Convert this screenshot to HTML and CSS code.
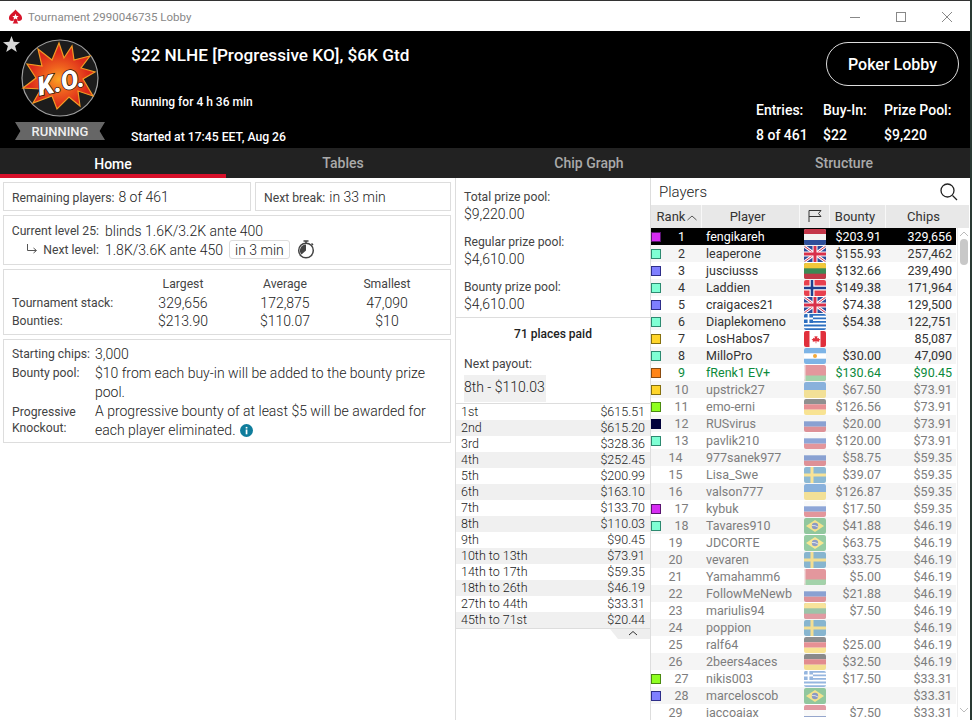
FILE: index.html
```html
<!DOCTYPE html>
<html lang="en">
<head>
    <meta charset="UTF-8">
    <meta name="viewport" content="width=device-width, initial-scale=1.0">
    <title>Tournament 2990046735 Lobby</title>
    <link rel="stylesheet" href="styles.css">
</head>
<body>
    <!-- flag sprites -->
    <svg class="sprites" xmlns="http://www.w3.org/2000/svg">
        <symbol id="nl" viewBox="0 0 22 16"><rect width="22" height="16" fill="#f4f4f4"/><rect width="22" height="5" fill="#c4374a"/><rect y="11" width="22" height="5" fill="#2f4f9a"/></symbol>
        <symbol id="gb" viewBox="0 0 22 16"><rect width="22" height="16" fill="#2f4a9a"/><path d="M0 0L22 16M22 0L0 16" stroke="#fff" stroke-width="3"/><path d="M0 0L22 16M22 0L0 16" stroke="#d8304a" stroke-width="1"/><path d="M11 0V16M0 8H22" stroke="#fff" stroke-width="5"/><path d="M11 0V16M0 8H22" stroke="#d8304a" stroke-width="3"/></symbol>
        <symbol id="lt" viewBox="0 0 22 16"><rect width="22" height="16" fill="#3c8a55"/><rect width="22" height="5.3" fill="#f2c83a"/><rect y="10.7" width="22" height="5.3" fill="#c23a48"/></symbol>
        <symbol id="no" viewBox="0 0 22 16"><rect width="22" height="16" fill="#e8404e"/><path d="M8 0V16M0 8H22" stroke="#fff" stroke-width="5"/><path d="M8 0V16M0 8H22" stroke="#1f3f8f" stroke-width="2.6"/></symbol>
        <symbol id="gr" viewBox="0 0 22 16"><rect width="22" height="16" fill="#2d6fc0"/><path d="M0 2.7H22M0 6.2H22M0 9.7H22M0 13.3H22" stroke="#fff" stroke-width="1.7"/><rect width="9" height="9" fill="#2d6fc0"/><path d="M4.5 0V9M0 4.5H9" stroke="#fff" stroke-width="1.8"/></symbol>
        <symbol id="ca" viewBox="0 0 22 16"><rect width="22" height="16" fill="#fff"/><rect width="5.5" height="16" fill="#e0303c"/><rect x="16.5" width="5.5" height="16" fill="#e0303c"/><path d="M11 3.5l1 2 1.5-.6-.5 2.6 1.600-.8.400 1.300 1.500.3-1.500 1.400.3 1-3-.4.100 2h-.800l.100-2-3 .4.300-1-1.500-1.400 1.500-.3.400-1.300 1.600.8-.500-2.600 1.500.6z" fill="#e0303c"/></symbol>
        <symbol id="ar" viewBox="0 0 22 16"><rect width="22" height="16" fill="#fff"/><rect width="22" height="5.300" fill="#7db4e6"/><rect y="10.700" width="22" height="5.300" fill="#7db4e6"/><circle cx="11" cy="8" r="2" fill="#f2a93a"/></symbol>
        <symbol id="by" viewBox="0 0 22 16"><rect width="22" height="16" fill="#c8313e"/><rect y="10.500" width="22" height="5.500" fill="#4aa657"/><rect width="1.500" height="16" fill="#e8c8c8"/></symbol>
        <symbol id="ua" viewBox="0 0 22 16"><rect width="22" height="8" fill="#1f6fc4"/><rect y="8" width="22" height="8" fill="#f0cc3c"/></symbol>
        <symbol id="de" viewBox="0 0 22 16"><rect width="22" height="5.300" fill="#222"/><rect y="5.300" width="22" height="5.400" fill="#d0232c"/><rect y="10.700" width="22" height="5.300" fill="#f2c82a"/></symbol>
        <symbol id="ru" viewBox="0 0 22 16"><rect width="22" height="5.300" fill="#f4f4f4"/><rect y="5.300" width="22" height="5.400" fill="#1f4fb0"/><rect y="10.700" width="22" height="5.300" fill="#c8303c"/></symbol>
        <symbol id="se" viewBox="0 0 22 16"><rect width="22" height="16" fill="#1b76ab"/><path d="M8 0V16M0 8H22" stroke="#f2c832" stroke-width="3"/></symbol>
        <symbol id="br" viewBox="0 0 22 16"><rect width="22" height="16" fill="#2f9a4a"/><path d="M11 2L20 8L11 14L2 8z" fill="#f2d02a"/><circle cx="11" cy="8" r="3.200" fill="#24408f"/><path d="M8 7.500Q11 7 14 9" stroke="#fff" stroke-width=".7" fill="none"/></symbol>
    </svg>

    <div class="window">
        <div class="titlebar">
            <svg class="app-icon" viewBox="0 0 16 16">
                <path d="M8 0C10 3 15 5 15 9.200C15 12 11.500 13 9.500 11.500C9.700 13 10.300 14 11 15H5C5.700 14 6.300 13 6.500 11.500C4.500 13 1 12 1 9.200C1 5 6 3 8 0Z" fill="#d7142a"/>
                <path d="M8 4.500l1 2.300 2.400.2-1.800 1.600.5 2.400L8 9.700l-2.100 1.300.5-2.400L4.600 7l2.400-.2z" fill="#fff"/>
            </svg>
            <span class="window-title">Tournament 2990046735 Lobby</span>
            <div class="window-btns">
                <svg viewBox="0 0 12 12"><path d="M1 6.500H11" stroke="#888" fill="none"/></svg>
                <svg viewBox="0 0 12 12"><rect x="1.500" y="1.500" width="9" height="9" stroke="#888" fill="none"/></svg>
                <svg viewBox="0 0 12 12"><path d="M1 1L11 11M11 1L1 11" stroke="#888" fill="none"/></svg>
            </div>
        </div>

        <header class="header">
            <div class="badge-col">
                <svg class="fav-star" viewBox="0 0 18 18"><path d="M9 0l2.300 6.200 6.700.3-5.200 4.100 1.800 6.400L9 13.300 3.400 17l1.800-6.400L0 6.500l6.700-.3z" fill="#d8d8d8"/></svg>
                <svg class="ko-logo" viewBox="0 0 78 78">
                    <defs>
                        <radialGradient id="burst" cx="50%" cy="55%" r="52%">
                            <stop offset="0" stop-color="#fba522"/>
                            <stop offset="0.35" stop-color="#f0641e"/>
                            <stop offset="0.8" stop-color="#dc2a1a"/>
                        </radialGradient>
                    </defs>
                    <circle cx="39" cy="39" r="38" fill="#1c1c1c" stroke="#a0a0a0" stroke-width="1.200"/>
                    <path d="M38 4L43 19L51 7L53 21L69 17L60 29L74 33L62 40L72 57L57 52L59 67L48 58L36 70L31 57L12 64L20 50L2 49L15 39L6 25L21 27L17 10L31 21Z" fill="url(#burst)" stroke="#f29a24" stroke-width="1.200" stroke-linejoin="miter"/>
                    <text class="ko-text" x="40" y="52" text-anchor="middle" transform="rotate(-12 40 44)">K.O.</text>
                </svg>
                <div class="ribbon">RUNNING</div>
            </div>
            <div class="info-col">
                <h1>$22 NLHE [Progressive KO], $6K Gtd</h1>
                <p class="running-for">Running for 4 h 36 min</p>
                <p class="started-at">Started at 17:45 EET, Aug 26</p>
            </div>
            <div class="summary-col">
                <button class="lobby-btn">Poker Lobby</button>
                <div class="summary">
                    <div><span>Entries:</span><span>8 of 461</span></div>
                    <div><span>Buy-In:</span><span>$22</span></div>
                    <div><span>Prize Pool:</span><span>$9,220</span></div>
                </div>
            </div>
        </header>

        <nav class="tabs">
            <div class="tab active">Home</div>
            <div class="tab">Tables</div>
            <div class="tab">Chip Graph</div>
            <div class="tab">Structure</div>
        </nav>

        <main class="content">
            <section class="left-panel">
                <div class="box-row">
                    <div class="box box-players"><span class="lbl">Remaining players:</span> <span class="val">8 of 461</span></div>
                    <div class="box box-break"><span class="lbl">Next break:</span> <span class="val">in 33 min</span></div>
                </div>
                <div class="box box-level">
                    <div class="level-row">
                        <span class="lbl level-lbl">Current level 25:</span>
                        <span class="val">blinds 1.6K/3.2K ante 400</span>
                    </div>
                    <div class="level-row">
                        <span class="lbl level-lbl">
                            <svg class="next-arrow" viewBox="0 0 12 10"><path d="M1.500 0V6.500H10M7.500 4L10.500 6.500L7.500 9" stroke="#555" fill="none"/></svg>
                            Next level:
                        </span>
                        <span class="val">1.8K/3.6K ante 450</span>
                        <span class="val pill">in 3 min</span>
                        <svg class="stopwatch" viewBox="0 0 18 19">
                            <circle cx="9" cy="10.500" r="7.300" fill="none" stroke="#444" stroke-width="1.500"/>
                            <path d="M9 10.500V4.500A6 6 0 0 0 4.500 14.500z" fill="#444"/>
                            <path d="M6.500 1H11.500M9 1V3M14.500 3.500L16 5" stroke="#444" stroke-width="1.500"/>
                        </svg>
                    </div>
                </div>
                <div class="box box-stats">
                    <span></span><span class="lbl c">Largest</span><span class="lbl c">Average</span><span class="lbl c">Smallest</span>
                    <span class="lbl">Tournament stack:</span><span class="val c">329,656</span><span class="val c">172,875</span><span class="val c">47,090</span>
                    <span class="lbl">Bounties:</span><span class="val c">$213.90</span><span class="val c">$110.07</span><span class="val c">$10</span>
                </div>
                <div class="box box-details">
                    <span class="lbl">Starting chips:</span><span class="val">3,000</span>
                    <span class="lbl">Bounty pool:</span><span class="val">$10 from each buy-in will be added to the bounty prize pool.</span>
                    <span class="lbl lbl-tight">Progressive Knockout:</span><span class="val">A progressive bounty of at least $5 will be awarded for each player eliminated. <svg class="info-dot" viewBox="0 0 13 13"><circle cx="6.500" cy="6.500" r="6.500" fill="#0f7d9c"/><rect x="5.700" y="5.500" width="1.700" height="4.800" fill="#fff"/><rect x="5.700" y="2.900" width="1.700" height="1.600" fill="#fff"/></svg></span>
                </div>
            </section>

            <section class="mid-panel">
                <div class="pools">
                    <div class="pool"><span class="lbl">Total prize pool:</span><span class="val">$9,220.00</span></div>
                    <div class="pool"><span class="lbl">Regular prize pool:</span><span class="val">$4,610.00</span></div>
                    <div class="pool"><span class="lbl">Bounty prize pool:</span><span class="val">$4,610.00</span></div>
                </div>
                <div class="paid">
                    <div class="places">71 places paid</div>
                    <div class="lbl next-lbl">Next payout:</div>
                    <div class="val next-val">8th - $110.03</div>
                </div>
                <div class="payouts">
                    <div class="payout"><span>1st</span><span>$615.51</span></div>
                    <div class="payout"><span>2nd</span><span>$615.20</span></div>
                    <div class="payout"><span>3rd</span><span>$328.36</span></div>
                    <div class="payout"><span>4th</span><span>$252.45</span></div>
                    <div class="payout"><span>5th</span><span>$200.99</span></div>
                    <div class="payout"><span>6th</span><span>$163.10</span></div>
                    <div class="payout"><span>7th</span><span>$133.70</span></div>
                    <div class="payout"><span>8th</span><span>$110.03</span></div>
                    <div class="payout"><span>9th</span><span>$90.45</span></div>
                    <div class="payout"><span>10th to 13th</span><span>$73.91</span></div>
                    <div class="payout"><span>14th to 17th</span><span>$59.35</span></div>
                    <div class="payout"><span>18th to 26th</span><span>$46.19</span></div>
                    <div class="payout"><span>27th to 44th</span><span>$33.31</span></div>
                    <div class="payout"><span>45th to 71st</span><span>$20.44</span></div>
                </div>
                <div class="collapse-tab">
                    <svg viewBox="0 0 10 6"><path d="M1 5L5 1.500L9 5" stroke="#333" fill="none"/></svg>
                </div>
            </section>

            <section class="players-panel">
                <div class="players-head">
                    <span>Players</span>
                    <svg viewBox="0 0 18 18"><circle cx="7.500" cy="7.500" r="6.500" fill="none" stroke="#222" stroke-width="1.300"/><path d="M12.500 12.500L17 17" stroke="#222" stroke-width="1.300"/></svg>
                </div>
                <div class="players-cols">
                    <div class="col-rank">Rank<svg viewBox="0 0 10 6"><path d="M.5 5L5 1L9.500 5" stroke="#555" fill="none"/></svg></div>
                    <div class="col-player">Player</div>
                    <div class="col-flag"><svg viewBox="0 0 14 14"><path d="M1 13V1.500H13L10.500 4.500L13 7.500H1" stroke="#333" fill="none"/></svg></div>
                    <div class="col-bounty">Bounty</div>
                    <div class="col-chips">Chips</div>
                </div>
                <div class="players-body">
                    <div class="rows">
                        <div class="row me"><i class="sq purple"></i><span class="rank">1</span><span class="name">fengikareh</span><svg class="flag"><use href="#nl"/></svg><span class="bounty">$203.91</span><span class="chips">329,656</span></div>
                        <div class="row"><i class="sq aqua"></i><span class="rank">2</span><span class="name">leaperone</span><svg class="flag"><use href="#gb"/></svg><span class="bounty">$155.93</span><span class="chips">257,462</span></div>
                        <div class="row"><i class="sq violet"></i><span class="rank">3</span><span class="name">jusciusss</span><svg class="flag"><use href="#lt"/></svg><span class="bounty">$132.66</span><span class="chips">239,490</span></div>
                        <div class="row"><i class="sq aqua"></i><span class="rank">4</span><span class="name">Laddien</span><svg class="flag"><use href="#no"/></svg><span class="bounty">$149.38</span><span class="chips">171,964</span></div>
                        <div class="row"><i class="sq violet"></i><span class="rank">5</span><span class="name">craigaces21</span><svg class="flag"><use href="#gb"/></svg><span class="bounty">$74.38</span><span class="chips">129,500</span></div>
                        <div class="row"><i class="sq aqua"></i><span class="rank">6</span><span class="name">Diaplekomeno</span><svg class="flag"><use href="#gr"/></svg><span class="bounty">$54.38</span><span class="chips">122,751</span></div>
                        <div class="row"><i class="sq yellow"></i><span class="rank">7</span><span class="name">LosHabos7</span><svg class="flag"><use href="#ca"/></svg><span class="bounty"></span><span class="chips">85,087</span></div>
                        <div class="row"><i class="sq aqua"></i><span class="rank">8</span><span class="name">MilloPro</span><svg class="flag"><use href="#ar"/></svg><span class="bounty">$30.00</span><span class="chips">47,090</span></div>
                        <div class="row hero out"><i class="sq orange"></i><span class="rank">9</span><span class="name">fRenk1 EV+</span><svg class="flag"><use href="#by"/></svg><span class="bounty">$130.64</span><span class="chips">$90.45</span></div>
                        <div class="row out"><i class="sq yellow"></i><span class="rank">10</span><span class="name">upstrick27</span><svg class="flag"><use href="#ua"/></svg><span class="bounty">$67.50</span><span class="chips">$73.91</span></div>
                        <div class="row out"><i class="sq lime"></i><span class="rank">11</span><span class="name">emo-erni</span><svg class="flag"><use href="#de"/></svg><span class="bounty">$126.56</span><span class="chips">$73.91</span></div>
                        <div class="row out"><i class="sq navy"></i><span class="rank">12</span><span class="name">RUSvirus</span><svg class="flag"><use href="#ru"/></svg><span class="bounty">$20.00</span><span class="chips">$73.91</span></div>
                        <div class="row out"><i class="sq aqua"></i><span class="rank">13</span><span class="name">pavlik210</span><svg class="flag"><use href="#ru"/></svg><span class="bounty">$120.00</span><span class="chips">$73.91</span></div>
                        <div class="row out"><span class="rank">14</span><span class="name">977sanek977</span><svg class="flag"><use href="#ru"/></svg><span class="bounty">$58.75</span><span class="chips">$59.35</span></div>
                        <div class="row out"><span class="rank">15</span><span class="name">Lisa_Swe</span><svg class="flag"><use href="#se"/></svg><span class="bounty">$39.07</span><span class="chips">$59.35</span></div>
                        <div class="row out"><span class="rank">16</span><span class="name">valson777</span><svg class="flag"><use href="#ua"/></svg><span class="bounty">$126.87</span><span class="chips">$59.35</span></div>
                        <div class="row out"><i class="sq purple"></i><span class="rank">17</span><span class="name">kybuk</span><svg class="flag"><use href="#ru"/></svg><span class="bounty">$17.50</span><span class="chips">$59.35</span></div>
                        <div class="row out"><i class="sq aqua"></i><span class="rank">18</span><span class="name">Tavares910</span><svg class="flag"><use href="#br"/></svg><span class="bounty">$41.88</span><span class="chips">$46.19</span></div>
                        <div class="row out"><span class="rank">19</span><span class="name">JDCORTE</span><svg class="flag"><use href="#br"/></svg><span class="bounty">$63.75</span><span class="chips">$46.19</span></div>
                        <div class="row out"><span class="rank">20</span><span class="name">vevaren</span><svg class="flag"><use href="#se"/></svg><span class="bounty">$33.75</span><span class="chips">$46.19</span></div>
                        <div class="row out"><span class="rank">21</span><span class="name">Yamahamm6</span><svg class="flag"><use href="#by"/></svg><span class="bounty">$5.00</span><span class="chips">$46.19</span></div>
                        <div class="row out"><span class="rank">22</span><span class="name">FollowMeNewb</span><svg class="flag"><use href="#ru"/></svg><span class="bounty">$21.88</span><span class="chips">$46.19</span></div>
                        <div class="row out"><span class="rank">23</span><span class="name">mariulis94</span><svg class="flag"><use href="#lt"/></svg><span class="bounty">$7.50</span><span class="chips">$46.19</span></div>
                        <div class="row out"><span class="rank">24</span><span class="name">poppion</span><svg class="flag"><use href="#se"/></svg><span class="bounty"></span><span class="chips">$46.19</span></div>
                        <div class="row out"><span class="rank">25</span><span class="name">ralf64</span><svg class="flag"><use href="#de"/></svg><span class="bounty">$25.00</span><span class="chips">$46.19</span></div>
                        <div class="row out"><span class="rank">26</span><span class="name">2beers4aces</span><svg class="flag"><use href="#de"/></svg><span class="bounty">$32.50</span><span class="chips">$46.19</span></div>
                        <div class="row out"><i class="sq lime"></i><span class="rank">27</span><span class="name">nikis003</span><svg class="flag"><use href="#gr"/></svg><span class="bounty">$17.50</span><span class="chips">$33.31</span></div>
                        <div class="row out"><i class="sq violet"></i><span class="rank">28</span><span class="name">marceloscob</span><svg class="flag"><use href="#br"/></svg><span class="bounty"></span><span class="chips">$33.31</span></div>
                        <div class="row out"><span class="rank">29</span><span class="name">jaccoajax</span><svg class="flag"><use href="#nl"/></svg><span class="bounty">$7.50</span><span class="chips">$33.31</span></div>
                    </div>
                    <div class="scrollbar">
                        <svg viewBox="0 0 10 6"><path d="M1 5L5 1L9 5" stroke="#bbb" fill="none"/></svg>
                        <div class="thumb"></div>
                        <svg viewBox="0 0 10 6"><path d="M1 1L5 5L9 1" stroke="#bbb" fill="none"/></svg>
                    </div>
                </div>
            </section>
        </main>
    </div>
</body>
</html>
```

FILE: styles.css
```css
* {
    margin: 0;
    padding: 0;
    box-sizing: border-box;
}

body {
    font-family: Roboto, "Liberation Sans", sans-serif;
    background: #2a3a34;
    color: #333;
    width: 972px;
    height: 720px;
    overflow: hidden;
}

.sprites {
    position: absolute;
    width: 0;
    height: 0;
}

.window {
    width: 970px;
    height: 720px;
    background: #fff;
    display: flex;
    flex-direction: column;
}

/* title bar */
.titlebar {
    height: 31px;
    flex: none;
    display: flex;
    align-items: center;
    padding: 1px 0 0 8px;
    border-top: 1px solid #333;
}

.app-icon {
    width: 15px;
    height: 16px;
}

.window-title {
    margin-left: 5px;
    font-size: 11.500px;
    color: #888;
}

.window-btns {
    margin-left: auto;
    display: flex;
    gap: 34px;
    padding-right: 17px;
}

.window-btns svg {
    width: 12px;
    height: 12px;
}

/* header */
.header {
    height: 117px;
    flex: none;
    background: #000;
    color: #fff;
    display: flex;
}

.badge-col {
    width: 131px;
    flex: none;
    position: relative;
    padding: 8px 0 0 21px;
}

.fav-star {
    position: absolute;
    left: 3px;
    top: 5px;
    width: 17px;
    height: 17px;
}

.ko-logo {
    display: block;
    width: 78px;
    height: 78px;
}

.ko-text {
    font-family: Roboto, sans-serif;
    font-size: 26px;
    font-weight: 900;
    font-style: italic;
    fill: #fff;
    stroke: #2a1208;
    stroke-width: 1.500px;
    paint-order: stroke;
}

.ribbon {
    width: 90px;
    height: 18px;
    margin: 5px 0 0 -6px;
    background: #666;
    color: #eee;
    font-size: 13px;
    font-weight: 500;
    line-height: 20px;
    text-align: center;
    clip-path: polygon(0 0, 100% 0, 94% 50%, 100% 100%, 0 100%, 6% 50%);
}

.info-col {
    flex: 1;
    display: flex;
    flex-direction: column;
    font-weight: 500;
}

.info-col h1 {
    font-size: 17.200px;
    font-weight: 500;
    line-height: 20px;
    margin-top: 14px;
}

.running-for {
    font-size: 12px;
    line-height: 14px;
    margin-top: 30px;
}

.started-at {
    font-size: 12.200px;
    line-height: 14px;
    margin-top: 21px;
}

.summary-col {
    width: 214px;
    flex: none;
    padding: 11px 11px 0 0;
    display: flex;
    flex-direction: column;
    align-items: flex-end;
}

.lobby-btn {
    width: 133px;
    height: 44px;
    background: #000;
    border: 1px solid #ddd;
    border-radius: 22px;
    color: #fff;
    font-family: Roboto, sans-serif;
    font-size: 16px;
    font-weight: 500;
}

.summary {
    display: flex;
    align-self: flex-start;
    margin-top: 15px;
    font-size: 14px;
    font-weight: 500;
}

.summary div {
    display: flex;
    flex-direction: column;
    gap: 7px;
    line-height: 18px;
}

.summary div:nth-child(1) {
    width: 67px;
}

.summary div:nth-child(2) {
    width: 61px;
}

/* tabs */
.tabs {
    height: 30px;
    flex: none;
    background: #222;
    display: flex;
}

.tab {
    width: 226px;
    color: #aaa;
    font-size: 14px;
    font-weight: 500;
    line-height: 30px;
    text-align: center;
}

.tab:nth-child(2) {
    width: 234px;
}

.tab:nth-child(3) {
    width: 258px;
}

.tab:nth-child(4) {
    width: 252px;
}

.tab.active {
    color: #fff;
    line-height: 32px;
    border-bottom: 4px solid #d7102a;
}

/* main */
.content {
    flex: 1;
    display: flex;
    min-height: 0;
}

.lbl {
    font-size: 12.200px;
    color: #444;
}

.val {
    font-size: 14px;
    font-weight: 300;
    color: #222;
}

.c {
    text-align: center;
}

.left-panel {
    width: 456px;
    flex: none;
    padding: 4px 4px 0 3px;
    border-right: 1px solid #ddd;
    display: flex;
    flex-direction: column;
    gap: 4px;
}

.box {
    border: 1px solid #ddd;
}

.box-row {
    display: flex;
    gap: 4px;
}

.box-players,
.box-break {
    height: 29px;
    line-height: 27px;
    padding-left: 8px;
}

.box-players {
    width: 248px;
}

.box-break {
    flex: 1;
}

.box-level {
    height: 50px;
    padding: 5px 0 0 0;
}

.level-row {
    display: flex;
    align-items: center;
    height: 19px;
}

.level-lbl {
    width: 95px;
    margin-right: 6px;
    text-align: right;
    white-space: nowrap;
}

.next-arrow {
    width: 12px;
    height: 10px;
    margin-right: 2px;
}

.pill {
    margin-left: 6px;
    padding: 0 5px;
    height: 19px;
    line-height: 18px;
    border: 1px solid #ddd;
    border-radius: 3px;
}

.stopwatch {
    width: 18px;
    height: 19px;
    margin-left: 7px;
}

.box-stats {
    height: 66px;
    padding: 5px 0 0 8px;
    display: grid;
    grid-template-columns: 120px 102px 102px 102px;
    grid-auto-rows: 18.500px;
    align-items: center;
}

.box-details {
    height: 104px;
    padding: 5px 8px 0 8px;
    display: grid;
    grid-template-columns: 83px 1fr;
    grid-auto-rows: min-content;
    line-height: 19px;
}

.lbl-tight {
    line-height: 16px;
    padding-top: 2px;
}

.info-dot {
    width: 13px;
    height: 13px;
    margin-left: 1px;
    vertical-align: -2px;
}

/* middle column */
.mid-panel {
    width: 195px;
    flex: none;
    position: relative;
    border-right: 1px solid #ddd;
}

.pools {
    height: 140px;
    padding: 10px 8px 0;
    border-bottom: 1px solid #ddd;
    display: flex;
    flex-direction: column;
    gap: 10px;
}

.pool {
    display: flex;
    flex-direction: column;
    line-height: 18px;
}

.pool .val {
    margin-top: -1px;
}

.paid {
    height: 86px;
    padding: 8px 8px 0;
    border-bottom: 1px solid #ddd;
}

.places {
    font-size: 12px;
    font-weight: 500;
    color: #222;
    line-height: 16px;
    text-align: center;
}

.next-lbl {
    margin-top: 14px;
    line-height: 16px;
}

.next-val {
    width: 82px;
    height: 27px;
    margin-top: 3px;
    background: #f0f0f0;
    line-height: 25px;
    white-space: nowrap;
}

.payouts {
    border-bottom: 1px solid #ddd;
}

.payout {
    height: 16px;
    padding: 0 5px 0 5px;
    display: flex;
    justify-content: space-between;
    font-size: 12.500px;
    font-weight: 300;
    color: #222;
    line-height: 16px;
}

.payout:nth-child(even) {
    background: #f0f0f0;
}

.collapse-tab {
    position: absolute;
    right: 0;
    top: 451px;
    width: 40px;
    height: 10px;
    background: #eee;
    clip-path: polygon(0 0, 100% 0, 100% 100%, 20% 100%);
}

.collapse-tab svg {
    display: block;
    width: 10px;
    height: 6px;
    margin: 1px 0 0 18px;
}

/* players list */
.players-panel {
    flex: 1;
    min-width: 0;
    display: flex;
    flex-direction: column;
}

.players-head {
    height: 27px;
    flex: none;
    display: flex;
    align-items: center;
    justify-content: space-between;
    padding: 0 12px 0 8px;
    font-size: 15px;
    font-weight: 300;
    color: #222;
}

.players-head svg {
    width: 18px;
    height: 18px;
}

.players-cols {
    height: 23px;
    flex: none;
    width: 318px;
    background: #e8e8e8;
    display: flex;
    font-size: 13px;
    color: #333;
    line-height: 23px;
    text-align: center;
}

.players-cols > div {
    border-right: 1px solid #f8f8f8;
}

.col-rank {
    width: 51px;
    padding-left: 2px;
    white-space: nowrap;
}

.col-rank svg {
    width: 10px;
    height: 6px;
    margin-left: 2px;
}

.col-player {
    width: 98px;
    padding-right: 6px;
}

.col-flag {
    width: 30px;
}

.col-flag svg {
    width: 14px;
    height: 14px;
    margin-top: 4px;
}

.col-bounty {
    width: 56px;
    padding-right: 5px;
}

.col-chips {
    width: 83px;
    padding-right: 8px;
    border-right: 0 !important;
}

.players-body {
    height: 489px;
    display: flex;
    overflow: hidden;
}

.rows {
    width: 305px;
    flex: none;
}

.row {
    height: 17px;
    display: flex;
    align-items: center;
    font-size: 12.500px;
    font-weight: 400;
    color: #333;
    position: relative;
}

.row:nth-child(even) {
    background: #f5f5f5;
}

.row.me {
    background: #000;
    color: #fff;
}

.row.out {
    color: #7d7d7d;
}

.row.hero {
    color: #0c8a3c;
}

.row.out .flag {
    opacity: 0.5;
}

.sq {
    width: 10px;
    height: 10px;
    flex: none;
    border: 1px solid;
}

.purple { background: #d62cf2; border-color: #5a1470; }
.aqua { background: #7fffd4; border-color: #2d8a70; }
.violet { background: #7f7fff; border-color: #2e2e8a; }
.yellow { background: #ffd52a; border-color: #85700f; }
.orange { background: #ff8417; border-color: #8a4a10; }
.lime { background: #8fff20; border-color: #4a8a10; }
.navy { background: #00003a; border-color: #00003a; }

.rank {
    flex: 1;
    text-align: center;
    padding-right: 2px;
}

.sq + .rank {
    padding-right: 0;
}

.name {
    width: 98px;
    flex: none;
    padding-left: 4px;
    white-space: nowrap;
}

.flag {
    width: 22px;
    height: 16px;
    flex: none;
    margin: 0 4px;
    border-radius: 2px;
}

.bounty {
    width: 55px;
    flex: none;
    padding-right: 4px;
    text-align: right;
}

.chips {
    width: 71px;
    flex: none;
    padding-right: 4px;
    text-align: right;
}

.scrollbar {
    width: 13px;
    margin-left: 1px;
    flex: none;
    display: flex;
    flex-direction: column;
    align-items: center;
    border-left: 1px solid #eee;
    padding-top: 3px;
}

.scrollbar svg {
    width: 10px;
    height: 6px;
    flex: none;
}

.thumb {
    width: 8px;
    height: 26px;
    margin-top: 2px;
    margin-bottom: auto;
    background: #c8c8c8;
    border-radius: 4px;
}

.scrollbar svg:last-child {
    margin-bottom: 4px;
}
```
